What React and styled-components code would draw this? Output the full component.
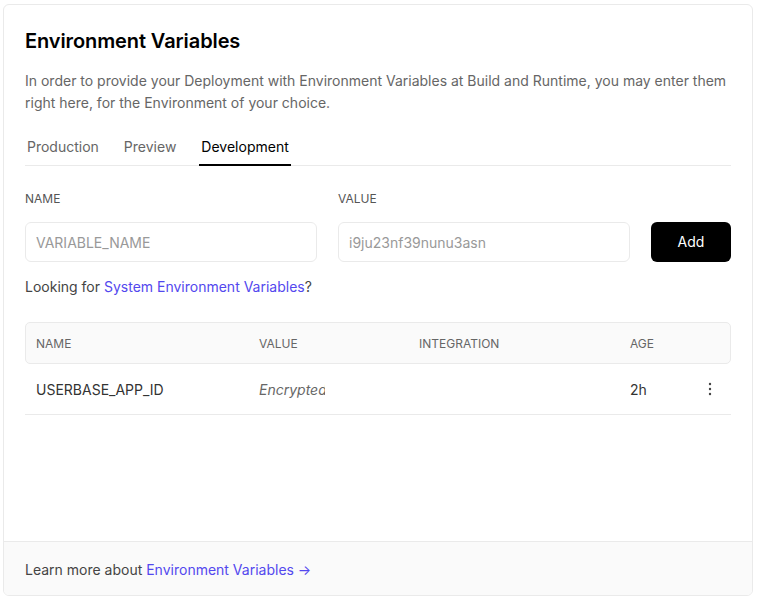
import React from 'react';
import styled, { createGlobalStyle } from 'styled-components';

const GlobalStyle = createGlobalStyle`
  html, body {
    margin: 0;
    padding: 0;
    background: #fff;
  }
  body {
    font-family: Inter, "Noto Sans", "Liberation Sans", sans-serif;
    -webkit-font-smoothing: antialiased;
  }
  * {
    box-sizing: border-box;
  }
`;

const tabs = ['Production', 'Preview', 'Development'];

const columns = [
  { key: 'name', label: 'Name' },
  { key: 'value', label: 'Value' },
  { key: 'integration', label: 'Integration' },
  { key: 'age', label: 'Age' },
];

const rows = [{ name: 'USERBASE_APP_ID', value: 'Encrypted', integration: '', age: '2h' }];

const DotsIcon = () => (
  <svg width="4" height="14" viewBox="0 0 4 14" fill="#444">
    <circle cx="2" cy="2" r="1.2" />
    <circle cx="2" cy="7" r="1.2" />
    <circle cx="2" cy="12" r="1.2" />
  </svg>
);

const App = () => (
  <Page>
    <GlobalStyle />
    <Card>
      <Body>
        <Title>Environment Variables</Title>
        <Description>
          In order to provide your Deployment with Environment Variables at Build and Runtime, you
          may enter them right here, for the Environment of your choice.
        </Description>
        <Tabs>
          {tabs.map((t) => (
            <Tab key={t} active={t === 'Development'}>
              {t}
            </Tab>
          ))}
        </Tabs>

        <Form>
          <Field>
            <Label>Name</Label>
            <Input placeholder="VARIABLE_NAME" />
          </Field>
          <Field>
            <Label>Value</Label>
            <Input placeholder="i9ju23nf39nunu3asn" />
          </Field>
          <AddButton>Add</AddButton>
        </Form>

        <Hint>
          Looking for <Link href="#">System Environment Variables</Link>?
        </Hint>

        <Table>
          <HeaderRow>
            {columns.map((c) => (
              <HeadCell key={c.key}>{c.label}</HeadCell>
            ))}
            <HeadCell />
          </HeaderRow>
          {rows.map((r) => (
            <Row key={r.name}>
              <Cell>{r.name}</Cell>
              <Cell>
                <Secret>{r.value}</Secret>
              </Cell>
              <Cell>{r.integration}</Cell>
              <Cell>{r.age}</Cell>
              <ActionCell>
                <DotsIcon />
              </ActionCell>
            </Row>
          ))}
        </Table>
      </Body>
      <Footer>
        Learn more about <Link href="#">Environment Variables →</Link>
      </Footer>
    </Card>
  </Page>
);

const Page = styled.div`
  padding: 4px 0 0 3px;
`;

const Card = styled.div`
  width: 750px;
  height: 592px;
  display: flex;
  flex-direction: column;
  border: 1px solid #eaeaea;
  border-radius: 6px;
  background: #fff;
  overflow: hidden;
`;

const Body = styled.div`
  flex: 1;
  padding: 24px 21px 0 21px;
`;

const Title = styled.h2`
  margin: 0;
  font-size: 20px;
  line-height: 24px;
  font-weight: 600;
  color: #000;
  letter-spacing: -0.1px;
`;

const Description = styled.p`
  margin: 17px 0 0;
  font-size: 14px;
  line-height: 22px;
  color: #666;
`;

const Tabs = styled.div`
  display: flex;
  gap: 21px;
  margin-top: 13px;
  border-bottom: 1px solid #eaeaea;
`;

const Tab = styled.div`
  padding: 9px 2px 6px;
  font-size: 14px;
  line-height: 22px;
  color: ${(p) => (p.active ? '#000' : '#666')};
  border-bottom: 2px solid ${(p) => (p.active ? '#000' : 'transparent')};
  margin-bottom: -1px;
`;

const Form = styled.div`
  display: grid;
  grid-template-columns: 1fr 1fr 80px;
  gap: 21px;
  align-items: end;
  margin-top: 25px;
`;

const Field = styled.label`
  display: flex;
  flex-direction: column;
  gap: 15px;
`;

const Label = styled.span`
  font-size: 12px;
  line-height: 16px;
  color: #555;
  text-transform: uppercase;
`;

const Input = styled.input`
  height: 40px;
  width: 100%;
  padding: 0 10px;
  border: 1px solid #eaeaea;
  border-radius: 6px;
  font-family: inherit;
  font-size: 14px;
  color: #000;
  outline: none;
  &::placeholder {
    color: #999;
  }
`;

const AddButton = styled.button`
  height: 40px;
  padding: 0 0 2px;
  border: none;
  border-radius: 6px;
  background: #000;
  color: #fff;
  font-family: inherit;
  font-size: 14px;
  cursor: pointer;
`;

const Hint = styled.p`
  margin: 15px 0 0;
  font-size: 14px;
  line-height: 20px;
  color: #444;
`;

const Link = styled.a`
  color: #5348ee;
  text-decoration: none;
`;

const Table = styled.div`
  margin-top: 25px;
`;

const grid = `
  display: grid;
  grid-template-columns: 223px 160px 211px 1fr 41px;
  align-items: center;
`;

const HeaderRow = styled.div`
  ${grid}
  height: 42px;
  background: #fafafa;
  border: 1px solid #eaeaea;
  border-radius: 5px;
`;

const HeadCell = styled.div`
  padding-left: 10px;
  font-size: 12px;
  color: #666;
  text-transform: uppercase;
`;

const Row = styled.div`
  ${grid}
  height: 51px;
  border-bottom: 1px solid #eaeaea;
`;

const Cell = styled.div`
  padding-left: 11px;
  font-size: 14px;
  color: #333;
`;

const Secret = styled.span`
  display: inline-block;
  max-width: 66px;
  overflow: hidden;
  white-space: nowrap;
  vertical-align: middle;
  font-style: italic;
  color: #666;
`;

const ActionCell = styled.div`
  display: flex;
  justify-content: center;
  padding-right: 1px;
`;

const Footer = styled.div`
  height: 54px;
  display: flex;
  align-items: center;
  padding: 2px 21px 0;
  background: #fafafa;
  border-top: 1px solid #eaeaea;
  font-size: 14px;
  color: #444;
  white-space: pre;
`;

export default App;
